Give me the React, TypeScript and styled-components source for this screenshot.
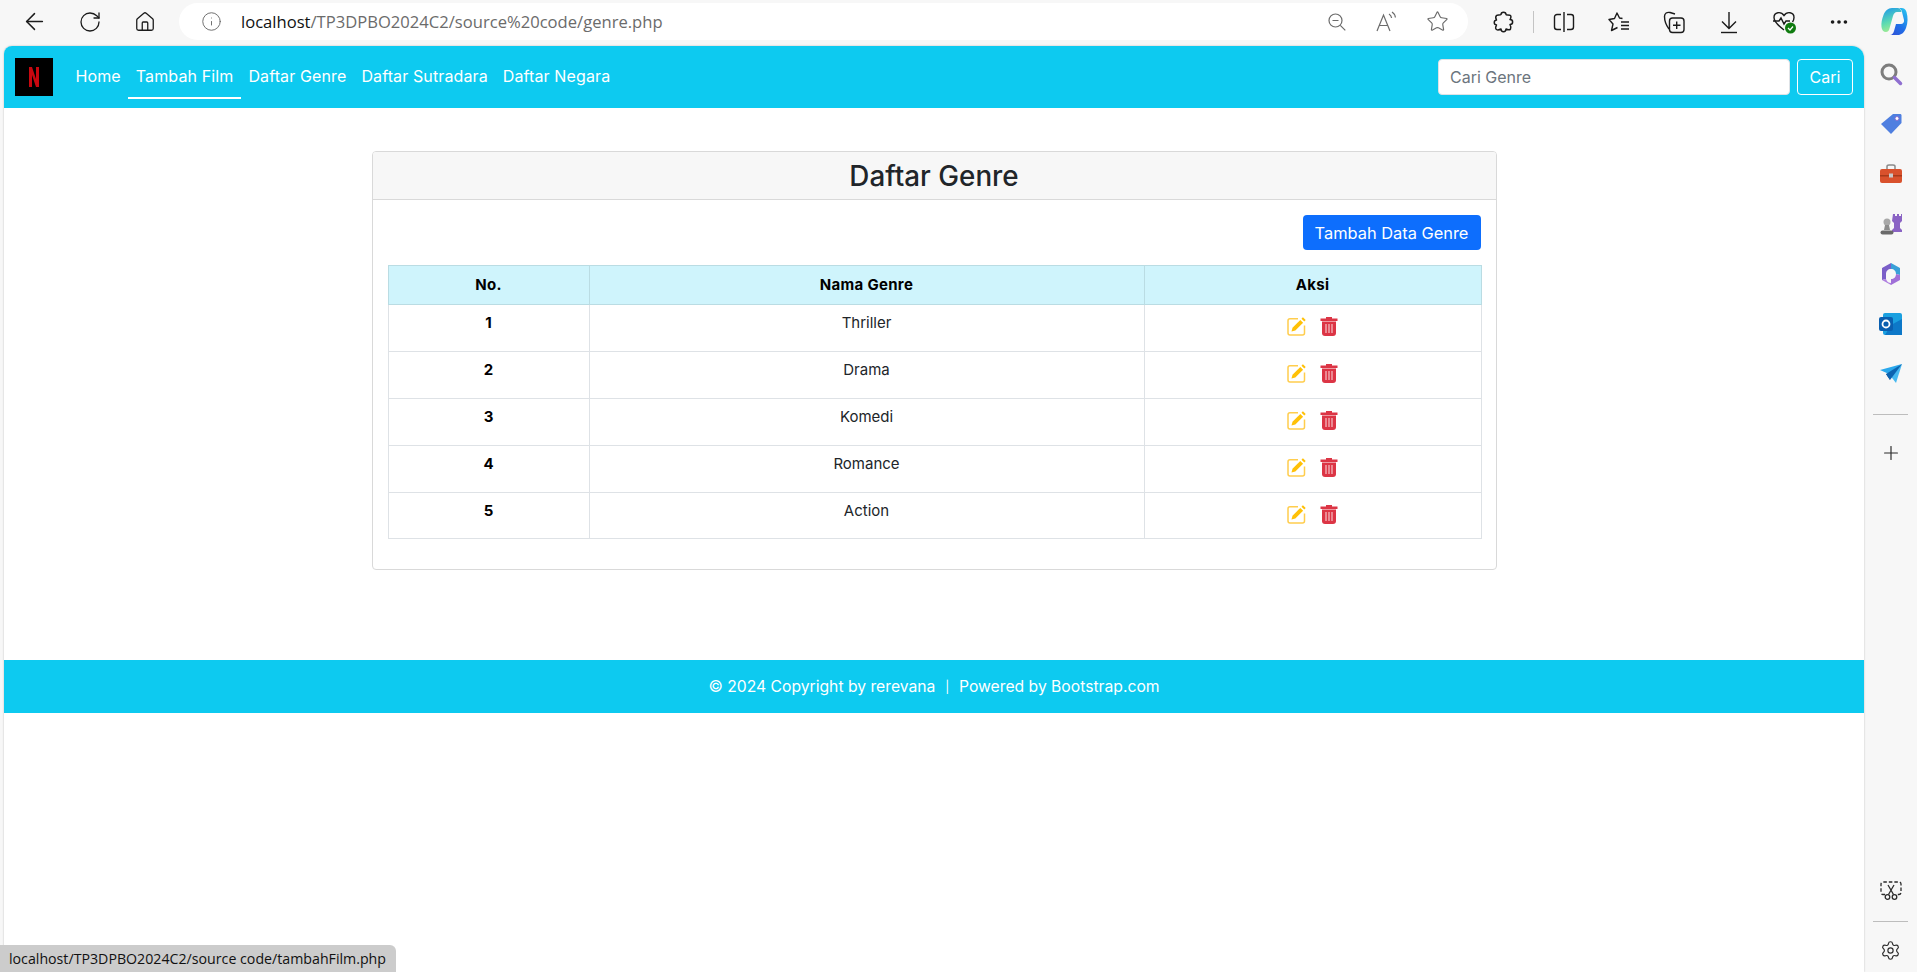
import React from 'react';
import styled, { createGlobalStyle } from 'styled-components';
import { ArrowLeft, RotateCw, Home, Info, Star, MoreHorizontal, Plus, Settings } from 'lucide-react';

const GlobalStyle = createGlobalStyle`
    html, body {
        margin : 0;
        padding : 0;
        height : 100%;
        overflow : hidden;
        background : #f7f7f7;
    }
    * {
        box-sizing : border-box;
    }
`

const genres = ['Thriller', 'Drama', 'Komedi', 'Romance', 'Action'];
const navLinks = ['Home', 'Tambah Film', 'Daftar Genre', 'Daftar Sutradara', 'Daftar Negara'];

const ZoomOutIcon = () => (
    <svg width="20" height="20" viewBox="0 0 20 20" fill="none" stroke="#6b6b6b" strokeWidth="1.2">
        <circle cx="8.5" cy="8.5" r="6.5" />
        <path d="M5.5 8.5h6M13.300 13.300l5 5" />
    </svg>
);

const ReadAloudIcon = () => (
    <svg width="24" height="22" viewBox="0 0 24 22" fill="none" stroke="#6b6b6b" strokeWidth="1.2">
        <path d="M2 20L8.5 4l6.500 16M4.400 14.500h8.200" />
        <path d="M14 3c1.600 1 2.400 2.400 2.600 4M17 1c2 1.300 3.200 3.300 3.400 5.500" />
    </svg>
);

const PuzzleIcon = () => (
    <svg width="22" height="22" viewBox="0 0 22 22" fill="none" stroke="#1b1b1b" strokeWidth="1.5" strokeLinejoin="round">
        <path d="M8 3.500c0-3 5-3 5 0 0 1 3.500 0 4.500 1s0 3.500-.5 4c3.500 0 3.500 5 0 5 .5 1 1.500 3 .5 4.500s-3.500.5-4.500 0c0 3.500-5 3.500-5 0-1 .5-3 1.500-4.500.5S3 15 3.500 14c-3-.5-3-4.500 0-5C3 8 2.500 5.500 3.500 4.500S7 4.500 8 3.500z" />
    </svg>
);

const SplitIcon = () => (
    <svg width="22" height="22" viewBox="0 0 22 22" fill="none" stroke="#1b1b1b" strokeWidth="1.4">
        <path d="M8 3.500H4a2.500 2.500 0 0 0-2.500 2.500v10A2.500 2.500 0 0 0 4 18.500h4" />
        <path d="M14 3.500h4A2.500 2.500 0 0 1 20.500 6v10a2.500 2.500 0 0 1-2.500 2.500h-4" />
        <path d="M11 1v20" />
    </svg>
);

const FavoritesIcon = () => (
    <svg width="24" height="22" viewBox="0 0 24 22" fill="none" stroke="#1b1b1b" strokeWidth="1.4" strokeLinejoin="round">
        <path d="M15.500 7.500L12.500 7 10 2 7.500 7.500 2 8.500l4 4.500-1.500 6.500 6-3" />
        <path d="M14 11h8M14 14.500h8M14 18h8" />
    </svg>
);

const CollectionsIcon = () => (
    <svg width="24" height="24" viewBox="0 0 24 24" fill="none" stroke="#1b1b1b" strokeWidth="1.4" strokeLinejoin="round">
        <path d="M7 19C4 15 2.500 11 2.500 6.500 2.500 3 5 2 8 2.500l5 1.500" />
        <rect x="7.500" y="8" width="14.500" height="14.500" rx="3" />
        <path d="M14.700 11.500v7.500M11 15.200h7.500" />
    </svg>
);

const DownloadIcon = () => (
    <svg width="22" height="24" viewBox="0 0 22 24" fill="none" stroke="#1b1b1b" strokeWidth="1.4">
        <path d="M11 2v16M4 11.500l7 7 7-7" />
        <path d="M3 22.500h16" />
    </svg>
);

const HealthIcon = () => (
    <svg width="26" height="24" viewBox="0 0 26 24">
        <path d="M13 20C7 15.500 3 12 3 7.500 3 2 10 1 13 5.500 16 1 23 2 23 7.500c0 1.500-.5 3-1.500 4.500" fill="none" stroke="#1b1b1b" strokeWidth="1.4" />
        <path d="M2 11h6l2-3 3 6 2-3h4" fill="none" stroke="#1b1b1b" strokeWidth="1.4" />
        <circle cx="19.500" cy="18" r="5.500" fill="#107c10" />
        <path d="M17 18l2 2 3-3.500" fill="none" stroke="#fff" strokeWidth="1.2" />
    </svg>
);

const CopilotIcon = () => (
    <svg width="28" height="30" viewBox="0 0 28 30">
        <defs>
            <linearGradient id="copilotA" x1="0.2" y1="0" x2="0.5" y2="1">
                <stop offset="0" stopColor="#1f9be8" />
                <stop offset="0.6" stopColor="#5fdcb0" />
                <stop offset="1" stopColor="#a8ec90" />
            </linearGradient>
            <linearGradient id="copilotB" x1="0.8" y1="0" x2="0.2" y2="1">
                <stop offset="0" stopColor="#28c0f0" />
                <stop offset="0.6" stopColor="#1f6fe8" />
                <stop offset="1" stopColor="#2f55d8" />
            </linearGradient>
        </defs>
        <path d="M26 21c2-5 2-11 .5-16-.8-2.500-2.500-4-5-4h-3c2 .5 3 2 3.500 4l2 8c.5 2-1 4-3 4h-5l-2 7c-.5 2-2 4-4 4h8c3 0 6-2 8-7z" fill="url(#copilotB)" />
        <path d="M18 1h-6c-4 0-7 3-8.500 7C2 12 1 16 1.500 20c.3 3 2 5 4.500 5 2 0 3-1.500 3.500-3.500L13 9c.6-2 2-4 4-4h4.500C21 3 20 1.300 18 1z" fill="url(#copilotA)" />
    </svg>
);

const SideSearchIcon = () => (
    <svg width="24" height="24" viewBox="0 0 24 24" fill="none">
        <circle cx="10" cy="10" r="7" stroke="#7d7d7d" strokeWidth="3" />
        <path d="M15.500 15.500l6 6" stroke="#8f6fd0" strokeWidth="3.500" strokeLinecap="round" />
    </svg>
);

const TagIcon = () => (
    <svg width="24" height="24" viewBox="0 0 24 24">
        <path d="M14 2h7c1 0 1.500.5 1.500 1.500V11L12 22 2 12z" fill="#4f7fe0" />
        <circle cx="18" cy="6.500" r="2" fill="#fff" stroke="#8a6fd0" />
    </svg>
);

const ToolboxIcon = () => (
    <svg width="24" height="22" viewBox="0 0 24 22">
        <path d="M8 7V3.500C8 2.500 9 2 10 2h4c1 0 2 .5 2 1.500V7" fill="none" stroke="#8a8a8a" strokeWidth="1.500" />
        <rect x="1" y="6" width="22" height="14" rx="2" fill="#d9512c" />
        <rect x="1" y="12" width="22" height="1.500" fill="#a83a1a" />
        <rect x="10" y="10.500" width="4" height="4" fill="#c8c8c8" />
    </svg>
);

const ChessIcon = () => (
    <svg width="24" height="24" viewBox="0 0 24 24">
        <path d="M14 2h2v2h2V2h2v2h2V2h1v7l-2 2v5l2 2v2H13v-2l2-2v-5l-2-2z" fill="#8a63c4" />
        <circle cx="8" cy="10" r="3.500" fill="#a8a8a8" />
        <path d="M6 13h4l1 5H5z" fill="#8c8c8c" />
        <rect x="1.500" y="18.500" width="13" height="4" rx="2" fill="#6a6a6a" />
    </svg>
);

const M365Icon = () => (
    <svg width="24" height="24" viewBox="0 0 24 24">
        <path d="M12 1l9 5v7l-4-1c0-3-2-5-5-5V1z" fill="#3aa0d8" />
        <path d="M3 6l9-5v6c-3 0-5 2-5 5v5l-4 1z" fill="#7a5fc8" />
        <path d="M3 18l4-1c1 3 3 4 5 4v2z" fill="#b080e0" />
        <path d="M12 17c3 0 5-2 5-5l4 1v5l-9 5z" fill="#a070d8" />
    </svg>
);

const OutlookIcon = () => (
    <svg width="24" height="24" viewBox="0 0 24 24">
        <rect x="4" y="1" width="19" height="22" rx="2" fill="#1aa0e0" />
        <path d="M12 13l11-6v16H6z" fill="#0d78c8" />
        <rect x="0" y="5" width="14" height="14" rx="2" fill="#0a5fb0" />
        <circle cx="7" cy="12" r="3.500" fill="none" stroke="#fff" strokeWidth="1.800" />
    </svg>
);

const SendIcon = () => (
    <svg width="24" height="22" viewBox="0 0 24 22">
        <path d="M1 7L23 1 10 11z" fill="#2aa8ec" />
        <path d="M23 1L17 20 10 11z" fill="#45b8f0" />
        <path d="M7 11l3 0 1 6z" fill="#123f78" />
        <path d="M23 1L7 11l4 6z" fill="#0c63b0" />
    </svg>
);

const ScreenshotIcon = () => (
    <svg width="22" height="22" viewBox="0 0 22 22" fill="none" stroke="#2b2b2b" strokeWidth="1.300">
        <path d="M5 14.500H3a2 2 0 0 1-2-2V4a2 2 0 0 1 2-2h16a2 2 0 0 1 2 2v8.500a2 2 0 0 1-2 2h-2" strokeDasharray="3.500 2" />
        <path d="M8 5l5.500 9.500M14 5l-5.500 9.500" />
        <circle cx="7.500" cy="17" r="2.300" />
        <circle cx="14.500" cy="17" r="2.300" />
    </svg>
);

const EditIcon = () => (
    <svg width="20" height="20" viewBox="0 0 20 20">
        <path d="M11 2.800H3A2 2 0 0 0 1 4.800V17a2 2 0 0 0 2 2h12.500a2 2 0 0 0 2-2V9.500" fill="none" stroke="#ffcd4d" strokeWidth="1.500" />
        <path d="M4.500 15.500l1-3.800 7.800-7.800 2.800 2.800-7.800 7.800z" fill="#ffc107" />
        <path d="M14.500 2.700l1.400-1.400 2.800 2.800-1.400 1.400z" fill="#ffc107" />
    </svg>
);

const TrashIcon = () => (
    <svg width="18" height="20" viewBox="0 0 18 20">
        <path d="M6 1h6v1.500h5.500V5H.5V2.500H6z" fill="#dc3545" />
        <path d="M2 5.500h14V17a3 3 0 0 1-3 3H5a3 3 0 0 1-3-3z" fill="#dc3545" />
        <path d="M6 8v9M9 8v9M12 8v9" stroke="#f5c2c7" strokeWidth="1.200" />
    </svg>
);

const NetflixLogo = () => (
    <svg width="12" height="20" viewBox="0 0 12 20">
        <path d="M1 0h3l4 12V0h3v20H8L4 8v12H1z" fill="#c8070f" />
    </svg>
);

const App = () => {
    return (
        <>
        <GlobalStyle />
        <Window>
            <BrowserBar>
                <ToolSlot><ArrowLeft size={27} strokeWidth={1.3} color="#1b1b1b" /></ToolSlot>
                <ToolSlot><RotateCw size={24} strokeWidth={1.3} color="#1b1b1b" /></ToolSlot>
                <ToolSlot><Home size={22} strokeWidth={1.4} color="#1b1b1b" /></ToolSlot>
                <AddressBar>
                    <Info size={21} strokeWidth={1.1} color="#6b6b6b" />
                    <AddressText><b>localhost</b>/TP3DPBO2024C2/source%20code/genre.php</AddressText>
                    <AddressIcons>
                        <AddressSlot><ZoomOutIcon /></AddressSlot>
                        <AddressSlot><ReadAloudIcon /></AddressSlot>
                        <AddressSlot><Star size={23} strokeWidth={1.2} color="#6b6b6b" /></AddressSlot>
                    </AddressIcons>
                </AddressBar>
                <ToolGroup>
                    <ToolSlot><PuzzleIcon /></ToolSlot>
                    <ToolDivider />
                    <ToolSlot><SplitIcon /></ToolSlot>
                    <ToolSlot><FavoritesIcon /></ToolSlot>
                    <ToolSlot><CollectionsIcon /></ToolSlot>
                    <ToolSlot><DownloadIcon /></ToolSlot>
                    <ToolSlot><HealthIcon /></ToolSlot>
                    <ToolSlot><MoreHorizontal size={22} strokeWidth={2} color="#1b1b1b" /></ToolSlot>
                    <ToolSlot><CopilotIcon /></ToolSlot>
                </ToolGroup>
            </BrowserBar>
            <Body>
                <Page>
                    <Navbar>
                        <Brand><NetflixLogo /></Brand>
                        <NavList>
                            {navLinks.map((link) => (
                                <NavLink key={link} $active={link === 'Tambah Film'}>{link}</NavLink>
                            ))}
                        </NavList>
                        <SearchForm>
                            <SearchInput placeholder="Cari Genre" readOnly />
                            <SearchButton>Cari</SearchButton>
                        </SearchForm>
                    </Navbar>
                    <Main>
                        <Card>
                            <CardHeader>Daftar Genre</CardHeader>
                            <CardBody>
                                <ActionRow>
                                    <PrimaryButton>Tambah Data Genre</PrimaryButton>
                                </ActionRow>
                                <Table>
                                    <thead>
                                        <tr>
                                            <HeadCell $width={201}>No.</HeadCell>
                                            <HeadCell $width={555}>Nama Genre</HeadCell>
                                            <HeadCell $width={337}>Aksi</HeadCell>
                                        </tr>
                                    </thead>
                                    <tbody>
                                        {genres.map((genre, i) => (
                                            <BodyRow key={genre}>
                                                <NumberCell>{i + 1}</NumberCell>
                                                <Cell>{genre}</Cell>
                                                <Cell>
                                                    <Actions>
                                                        <EditIcon />
                                                        <TrashIcon />
                                                    </Actions>
                                                </Cell>
                                            </BodyRow>
                                        ))}
                                    </tbody>
                                </Table>
                            </CardBody>
                        </Card>
                    </Main>
                    <Footer>© 2024 Copyright by rerevana &nbsp;<FooterBar>|</FooterBar>&nbsp; Powered by Bootstrap.com</Footer>
                </Page>
                <SideBar>
                    <SideGroup>
                        <SideSlot><SideSearchIcon /></SideSlot>
                        <SideSlot><TagIcon /></SideSlot>
                        <SideSlot><ToolboxIcon /></SideSlot>
                        <SideSlot><ChessIcon /></SideSlot>
                        <SideSlot><M365Icon /></SideSlot>
                        <SideSlot><OutlookIcon /></SideSlot>
                        <SideSlot><SendIcon /></SideSlot>
                        <SideDivider $top={15} $bottom={13} />
                        <SideSlot><Plus size={22} strokeWidth={1.3} color="#2b2b2b" /></SideSlot>
                    </SideGroup>
                    <SideGroup>
                        <SideSmallSlot><ScreenshotIcon /></SideSmallSlot>
                        <SideDivider $top={8} $bottom={6} />
                        <SideSmallSlot><Settings size={21} strokeWidth={1.3} color="#2b2b2b" /></SideSmallSlot>
                    </SideGroup>
                </SideBar>
            </Body>
            <StatusTip>localhost/TP3DPBO2024C2/source code/tambahFilm.php</StatusTip>
        </Window>
        </>
    )
}

const Window = styled.div`
    position : relative;
    width : 1917px;
    height : 972px;
    display : flex;
    flex-direction : column;
    background : #f7f7f7;
    font-family : 'Inter', 'Liberation Sans', sans-serif;
    overflow : hidden;
`

const BrowserBar = styled.div`
    height : 46px;
    padding : 3px 0 0 7px;
    display : flex;
    align-items : flex-start;
    flex-shrink : 0;
`

const ToolSlot = styled.div`
    width : 55px;
    height : 37px;
    display : flex;
    align-items : center;
    justify-content : center;
    flex-shrink : 0;
`

const AddressBar = styled.div`
    width : 1289px;
    height : 37px;
    margin-left : 7px;
    padding : 0 0 0 22px;
    display : flex;
    align-items : center;
    background : #ffffff;
    border-radius : 19px;
    flex-shrink : 0;
`

const AddressText = styled.span`
    margin-left : 19px;
    font-family : 'Open Sans', sans-serif;
    font-size : 16.6px;
    color : #6b6b6b;
    white-space : nowrap;

    & > b {
        font-weight : 400;
        color : #111111;
    }
`

const AddressIcons = styled.div`
    margin-left : auto;
    padding-right : 6px;
    display : flex;
`

const AddressSlot = styled.div`
    width : 50px;
    height : 37px;
    display : flex;
    align-items : center;
    justify-content : center;
`

const ToolGroup = styled.div`
    margin-left : 8px;
    display : flex;
    align-items : center;
    height : 37px;
`

const ToolDivider = styled.div`
    width : 1px;
    height : 22px;
    margin : 0 2px 0 2px;
    background : #c4c4c4;
`

const Body = styled.div`
    flex : 1;
    display : flex;
    min-height : 0;
`

const Page = styled.div`
    width : 1860px;
    margin-left : 4px;
    display : flex;
    flex-direction : column;
    background : #ffffff;
    border-radius : 8px 12px 0 0;
    overflow : hidden;
    box-shadow : 0 0 2px rgba(0, 0, 0, 0.25);
`

const Navbar = styled.nav`
    height : 62px;
    padding : 0 11px;
    display : flex;
    align-items : center;
    background : #0dcaf0;
    flex-shrink : 0;
`

const Brand = styled.div`
    width : 38px;
    height : 38px;
    display : flex;
    align-items : center;
    justify-content : center;
    background : #000000;
`

const NavList = styled.div`
    margin-left : 15px;
    display : flex;
    align-items : center;
`

const NavLink = styled.a<{ $active?: boolean }>`
    padding : 7px 7.5px 9px;
    font-size : 16px;
    letter-spacing : 0.12px;
    line-height : 23px;
    color : #ffffff;
    white-space : nowrap;
    box-shadow : ${({ $active }) => ($active ? '0 2px 0 #ffffff' : 'none')};
`

const SearchForm = styled.div`
    margin-left : auto;
    display : flex;
    gap : 7px;
`

const SearchInput = styled.input`
    width : 352px;
    height : 36px;
    padding : 0 11px;
    border : 1px solid #dee2e6;
    border-radius : 4px;
    font-family : inherit;
    font-size : 16px;
    background : #ffffff;

    &::placeholder {
        color : #6c757d;
    }
`

const SearchButton = styled.button`
    width : 56px;
    height : 36px;
    padding : 0;
    border : 1px solid #ffffff;
    border-radius : 4px;
    background : transparent;
    color : #ffffff;
    font-family : inherit;
    font-size : 16px;
`

const Main = styled.main`
    padding : 43px 0 0;
    height : 552px;
    display : flex;
    justify-content : center;
    flex-shrink : 0;
`

const Card = styled.section`
    width : 1125px;
    height : 419px;
    border : 1px solid #d9d9d9;
    border-radius : 4px;
    overflow : hidden;
`

const CardHeader = styled.h2`
    margin : 0;
    height : 48px;
    display : flex;
    align-items : center;
    justify-content : center;
    background : #f7f7f7;
    border-bottom : 1px solid #d9d9d9;
    font-size : 27.8px;
    font-weight : 500;
    color : #212529;
`

const CardBody = styled.div`
    padding : 15px;
`

const ActionRow = styled.div`
    display : flex;
    justify-content : flex-end;
    margin-bottom : 15px;
`

const PrimaryButton = styled.button`
    width : 178px;
    height : 35px;
    padding : 0;
    border : none;
    border-radius : 4px;
    background : #0d6efd;
    color : #ffffff;
    font-family : inherit;
    font-size : 16.4px;
    white-space : nowrap;
`

const Table = styled.table`
    width : calc(100% - 1px);
    table-layout : fixed;
    border-collapse : collapse;
    font-size : 15px;
    color : #212529;
`

const HeadCell = styled.th<{ $width: number }>`
    width : ${({ $width }) => $width}px;
    height : 39px;
    padding : 7px 8px 9px;
    background : #cff4fc;
    border : 1px solid #badce3;
    font-weight : 700;
    letter-spacing : 0.3px;
    color : #000000;
    line-height : 21px;
`

const Cell = styled.td`
    height : 47px;
    padding : 7px 8px 8px;
    border : 1px solid #dee2e6;
    text-align : center;
    vertical-align : top;
    line-height : 21px;
`

const BodyRow = styled.tr`
    &:last-child > td {
        height : 46px;
    }
    &:nth-child(2n) > td {
        height : 47px;
    }
`

const NumberCell = styled(Cell)`
    font-weight : 700;
    color : #000000;
`

const Actions = styled.div`
    height : 30px;
    padding-top : 4px;
    display : flex;
    justify-content : center;
    align-items : flex-start;
    gap : 13px;
`

const Footer = styled.footer`
    height : 53px;
    display : flex;
    align-items : center;
    justify-content : center;
    background : #0dcaf0;
    color : #ffffff;
    font-size : 15.7px;
    white-space : pre;
    flex-shrink : 0;
`

const FooterBar = styled.span`
    font-size : 12px;
    padding : 0 1px;
`

const SideBar = styled.aside`
    flex : 1;
    padding-top : 3px;
    display : flex;
    flex-direction : column;
    justify-content : space-between;
    align-items : center;
`

const SideGroup = styled.div`
    width : 100%;
    display : flex;
    flex-direction : column;
    align-items : center;
`

const SideSlot = styled.div`
    width : 100%;
    height : 50px;
    display : flex;
    align-items : center;
    justify-content : center;
`

const SideSmallSlot = styled(SideSlot)`
    height : 44px;
`

const SideDivider = styled.div<{ $top: number; $bottom: number }>`
    width : 35px;
    height : 1px;
    margin : ${({ $top, $bottom }) => `${$top}px 0 ${$bottom}px`};
    background : #bdbdbd;
`

const StatusTip = styled.div`
    position : absolute;
    left : 0;
    bottom : 0;
    width : 396px;
    height : 27px;
    padding : 0 0 0 9px;
    display : flex;
    align-items : center;
    background : #cccccc;
    border-radius : 0 6px 0 0;
    font-family : 'Open Sans', sans-serif;
    font-size : 14.2px;
    color : #111111;
    white-space : nowrap;
`

export default App;
